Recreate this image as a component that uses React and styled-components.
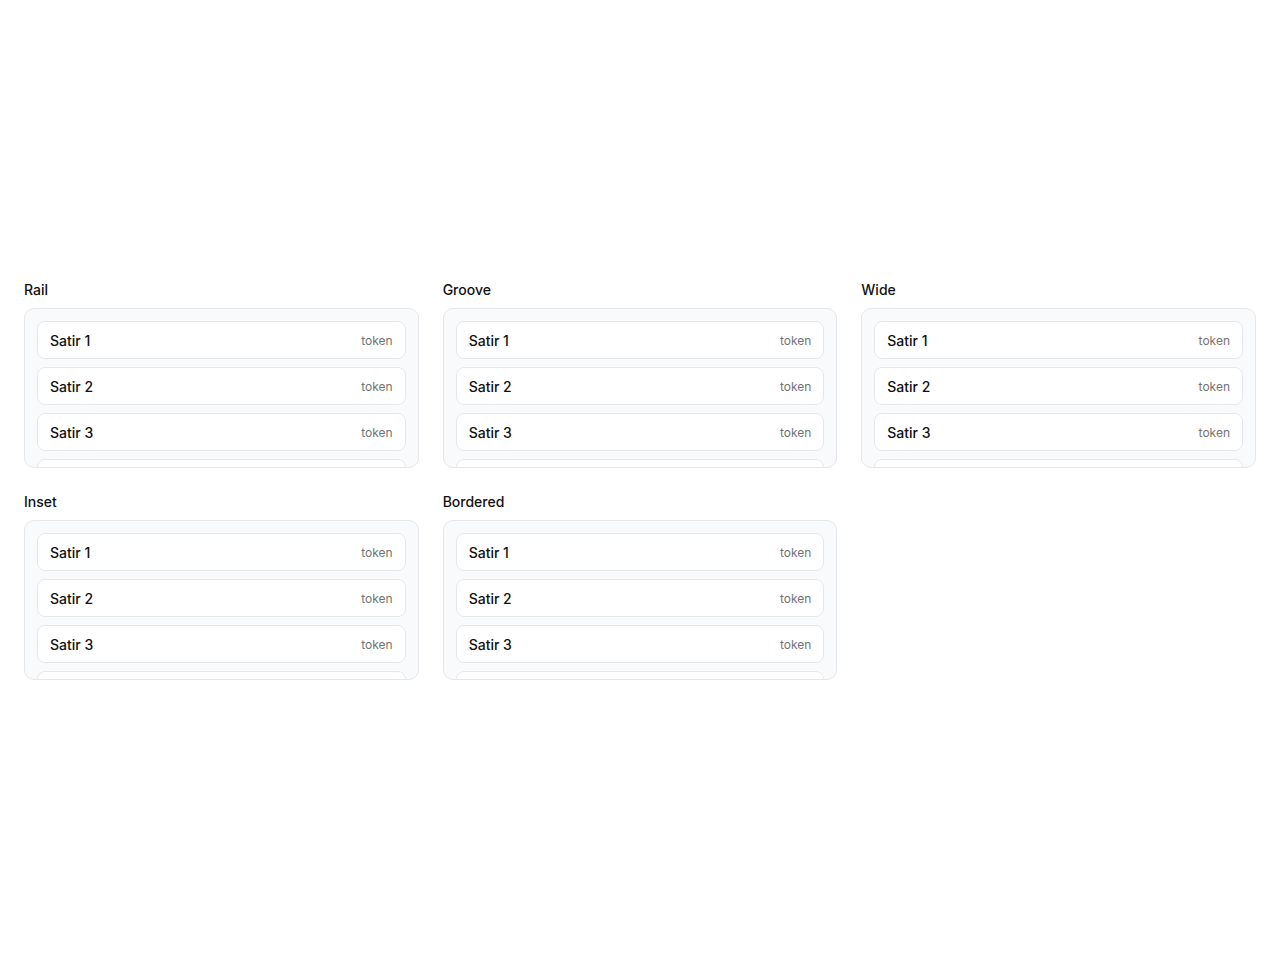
import React from "react";
import styled, { createGlobalStyle } from "styled-components";

const GlobalStyle = createGlobalStyle`
  * { box-sizing: border-box; }
  body {
    margin: 0;
    background: #ffffff;
    font-family: Inter, "Noto Sans", "Liberation Sans", sans-serif;
    color: #111827;
  }
`;

const variants = ["Rail", "Groove", "Wide", "Inset", "Bordered"];
const rows = ["Satir 1", "Satir 2", "Satir 3", "Satir 4"];

const App = () => {
  return (
    <>
      <GlobalStyle />
      <Page>
        <Grid>
          {variants.map((name) => (
            <Section key={name}>
              <Title>{name}</Title>
              <Panel>
                {rows.map((row) => (
                  <Row key={row}>
                    <Label>{row}</Label>
                    <Token>token</Token>
                  </Row>
                ))}
              </Panel>
            </Section>
          ))}
        </Grid>
      </Page>
    </>
  );
};

const Page = styled.div`
  min-height: 100vh;
  display: flex;
  align-items: center;
  padding: 0 24px;
`;
const Grid = styled.div`
  width: 100%;
  display: grid;
  grid-template-columns: repeat(3, 1fr);
  gap: 24px;
`;
const Section = styled.div`
  display: flex;
  flex-direction: column;
  gap: 8px;
`;
const Title = styled.div`
  font-size: 14px;
  line-height: 20px;
  font-weight: 500;
  color: #111111;
`;
const Panel = styled.div`
  height: 160px;
  overflow: hidden;
  display: flex;
  flex-direction: column;
  gap: 8px;
  padding: 12px;
  background: #f9fafb;
  border: 1px solid #e5e7eb;
  border-radius: 10px;
`;
const Row = styled.div`
  flex: 0 0 38px;
  display: flex;
  align-items: center;
  justify-content: space-between;
  padding: 0 12px;
  background: #ffffff;
  border: 1px solid #e5e7eb;
  border-radius: 8px;
`;
const Label = styled.span`
  font-size: 14px;
  font-weight: 500;
  color: #111111;
`;
const Token = styled.span`
  font-size: 12px;
  color: #737373;
`;

export default App;
